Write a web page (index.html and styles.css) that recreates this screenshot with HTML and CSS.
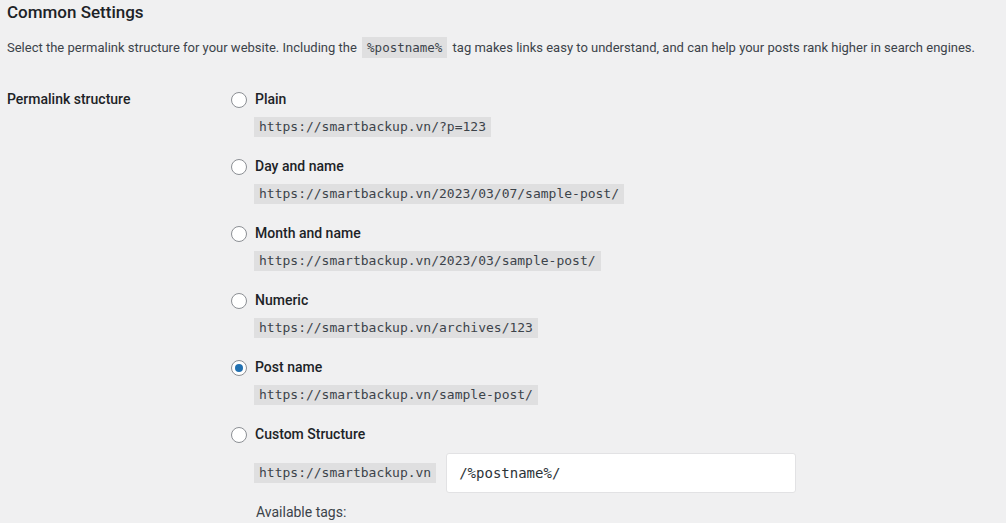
FILE: index.html
```html
<!DOCTYPE html>
<html>
<head>
<meta charset="utf-8">
<link rel="stylesheet" href="styles.css">
</head>
<body>
<div class="wrap">
  <h2 class="title">Common Settings</h2>
  <p class="desc">Select the permalink structure for your website. Including the <code>%postname%</code> tag makes links easy to understand, and can help your posts rank higher in search engines.</p>
  <div class="form-row">
    <div class="th">Permalink structure</div>
    <div class="td">
      <div class="opt">
        <label class="lbl"><span class="radio"></span>Plain</label>
        <code class="ex">https://smartbackup.vn/?p=123</code>
      </div>
      <div class="opt">
        <label class="lbl"><span class="radio"></span>Day and name</label>
        <code class="ex">https://smartbackup.vn/2023/03/07/sample-post/</code>
      </div>
      <div class="opt">
        <label class="lbl"><span class="radio"></span>Month and name</label>
        <code class="ex">https://smartbackup.vn/2023/03/sample-post/</code>
      </div>
      <div class="opt">
        <label class="lbl"><span class="radio"></span>Numeric</label>
        <code class="ex">https://smartbackup.vn/archives/123</code>
      </div>
      <div class="opt">
        <label class="lbl"><span class="radio checked"></span>Post name</label>
        <code class="ex">https://smartbackup.vn/sample-post/</code>
      </div>
      <div class="opt custom">
        <label class="lbl"><span class="radio"></span>Custom Structure</label>
        <div class="custom-row">
          <code class="ex">https://smartbackup.vn</code>
          <div class="input">/%postname%/</div>
        </div>
        <div class="tags">Available tags:</div>
      </div>
    </div>
  </div>
</div>
</body>
</html>
```

FILE: styles.css
```css
html, body {
  margin: 0;
  padding: 0;
  background: #f0f0f1;
}
body {
  font-family: Roboto, "Noto Sans", sans-serif;
  color: #3c434a;
  font-size: 14px;
  overflow: hidden;
}
.wrap {
  padding: 0 7px;
}
.title {
  margin: 0;
  padding-top: 2px;
  font-size: 17px;
  font-weight: 500;
  line-height: 20px;
  color: #1d2327;
}
.desc {
  margin: 16px 0 0 0;
  font-size: 13px;
  line-height: 20px;
}
code {
  font-family: "DejaVu Sans Mono", monospace;
  font-size: 13px;
  background: rgba(0,0,0,0.07);
  padding: 3px 5px;
  line-height: 14px;
  color: #3c434a;
}
.desc code {
  font-size: 12.5px;
  margin: 0 2px;
}
.form-row {
  display: grid;
  grid-template-columns: 224px 1fr;
  margin-top: 29px;
}
.th {
  font-size: 14px;
  font-weight: 500;
  color: #1d2327;
  line-height: 24px;
}
.td {
  display: flex;
  flex-direction: column;
}
.opt {
  display: flex;
  flex-direction: column;
  align-items: flex-start;
  margin-bottom: 17px;
}
.lbl {
  display: flex;
  align-items: center;
  gap: 8px;
  height: 24px;
  font-size: 14px;
  font-weight: 500;
  color: #1d2327;
}
.radio {
  width: 14px;
  height: 14px;
  border: 1px solid #8c8f94;
  border-radius: 50%;
  background: #fff;
  display: inline-flex;
  align-items: center;
  justify-content: center;
  margin-top: 2px;
}
.radio.checked::after {
  content: "";
  width: 8px;
  height: 8px;
  border-radius: 50%;
  background: #2271b1;
}
.ex {
  margin: 6px 0 0 23px;
  display: block;
}
.custom-row {
  display: flex;
  align-items: center;
  gap: 10px;
  margin: 7px 0 0 23px;
}
.custom-row .ex {
  margin: 0;
}
.input {
  width: 336px;
  height: 38px;
  box-sizing: content-box;
  border: 1px solid #e2e2e4;
  border-radius: 3px;
  background: #fff;
  font-family: "DejaVu Sans Mono", monospace;
  font-size: 14px;
  color: #2c3338;
  display: flex;
  align-items: center;
  padding-left: 12px;
}
.tags {
  margin: 9px 0 0 25px;
  font-size: 14px;
  line-height: 20px;
}
```
